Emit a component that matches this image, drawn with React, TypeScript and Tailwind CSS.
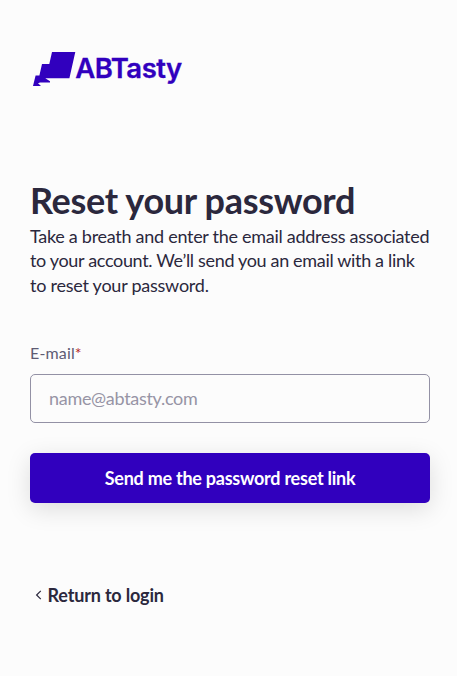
function Logo() {
  return (
    <svg className="block" width="153" height="38" viewBox="0 0 153 38" role="img" aria-label="ABTasty">
      <path
        fill="#3100be"
        d="M22 2H45.3L39.4 28.3H15.3L20 31.3V32.5H10L8 33.2L11 36V36H3L5.6 25.6H9.4L12 14H19.3Z"
      />
      <text
        x="45.2"
        y="28"
        textLength="107"
        lengthAdjust="spacing"
        fill="#3100be"
        stroke="#3100be"
        strokeWidth="0.3"
        className="font-['Inter',sans-serif] text-[27.5px] font-semibold"
      >
        ABTasty
      </text>
    </svg>
  );
}

export default function App() {
  return (
    <main className="flex min-h-screen flex-col bg-[#fcfcfc] px-[30px] pr-[27px] pt-[50px] font-['Lato',sans-serif] text-[#2b283d]">
      <Logo />
      <h1 className="mt-[90px] text-[36px] leading-[44px] font-bold tracking-[-0.32px] whitespace-nowrap">Reset your password</h1>
      <p className="mt-[1.75px] text-[18px] leading-[24.5px] tracking-[-0.28px] whitespace-nowrap">
        Take a breath and enter the email address associated
        <br />
        <span className="tracking-[-0.33px]">to your account. We’ll send you an email with a link</span>
        <br />
        <span className="tracking-[-0.24px]">to reset your password.</span>
      </p>
      <form className="mt-[45.75px] flex flex-col">
        <label htmlFor="email" className="text-[16px] leading-[20px] tracking-[0.15px] text-[#5e5b73]">
          E-mail<span className="text-[#b3261e]">*</span>
        </label>
        <input
          id="email"
          type="email"
          placeholder="name@abtasty.com"
          className="mt-[11px] h-[49px] rounded-[5px] border border-[#9391a5] bg-transparent px-[18px] pb-[1px] text-[18px] tracking-[-0.3px] placeholder:text-[#9794a5]"
        />
        <button
          type="button"
          className="mt-[30px] h-[50px] rounded-[5px] bg-[#3100be] pt-[1px] text-[18px] font-bold tracking-[-0.25px] text-white shadow-[0_6px_24px_rgba(0,0,0,0.13)]"
        >
          Send me the password reset link
        </button>
      </form>
      <a className="mt-[80px] flex items-center text-[18px] leading-[24px] font-bold tracking-[-0.17px]">
        <svg className="mr-[4.5px] ml-[5px]" width="8" height="10" viewBox="0 0 8 10" fill="none" stroke="currentColor" strokeWidth="1.2">
          <path d="M5.8 0.8L1.6 5L5.8 9.2" />
        </svg>
        Return to login
      </a>
    </main>
  );
}
